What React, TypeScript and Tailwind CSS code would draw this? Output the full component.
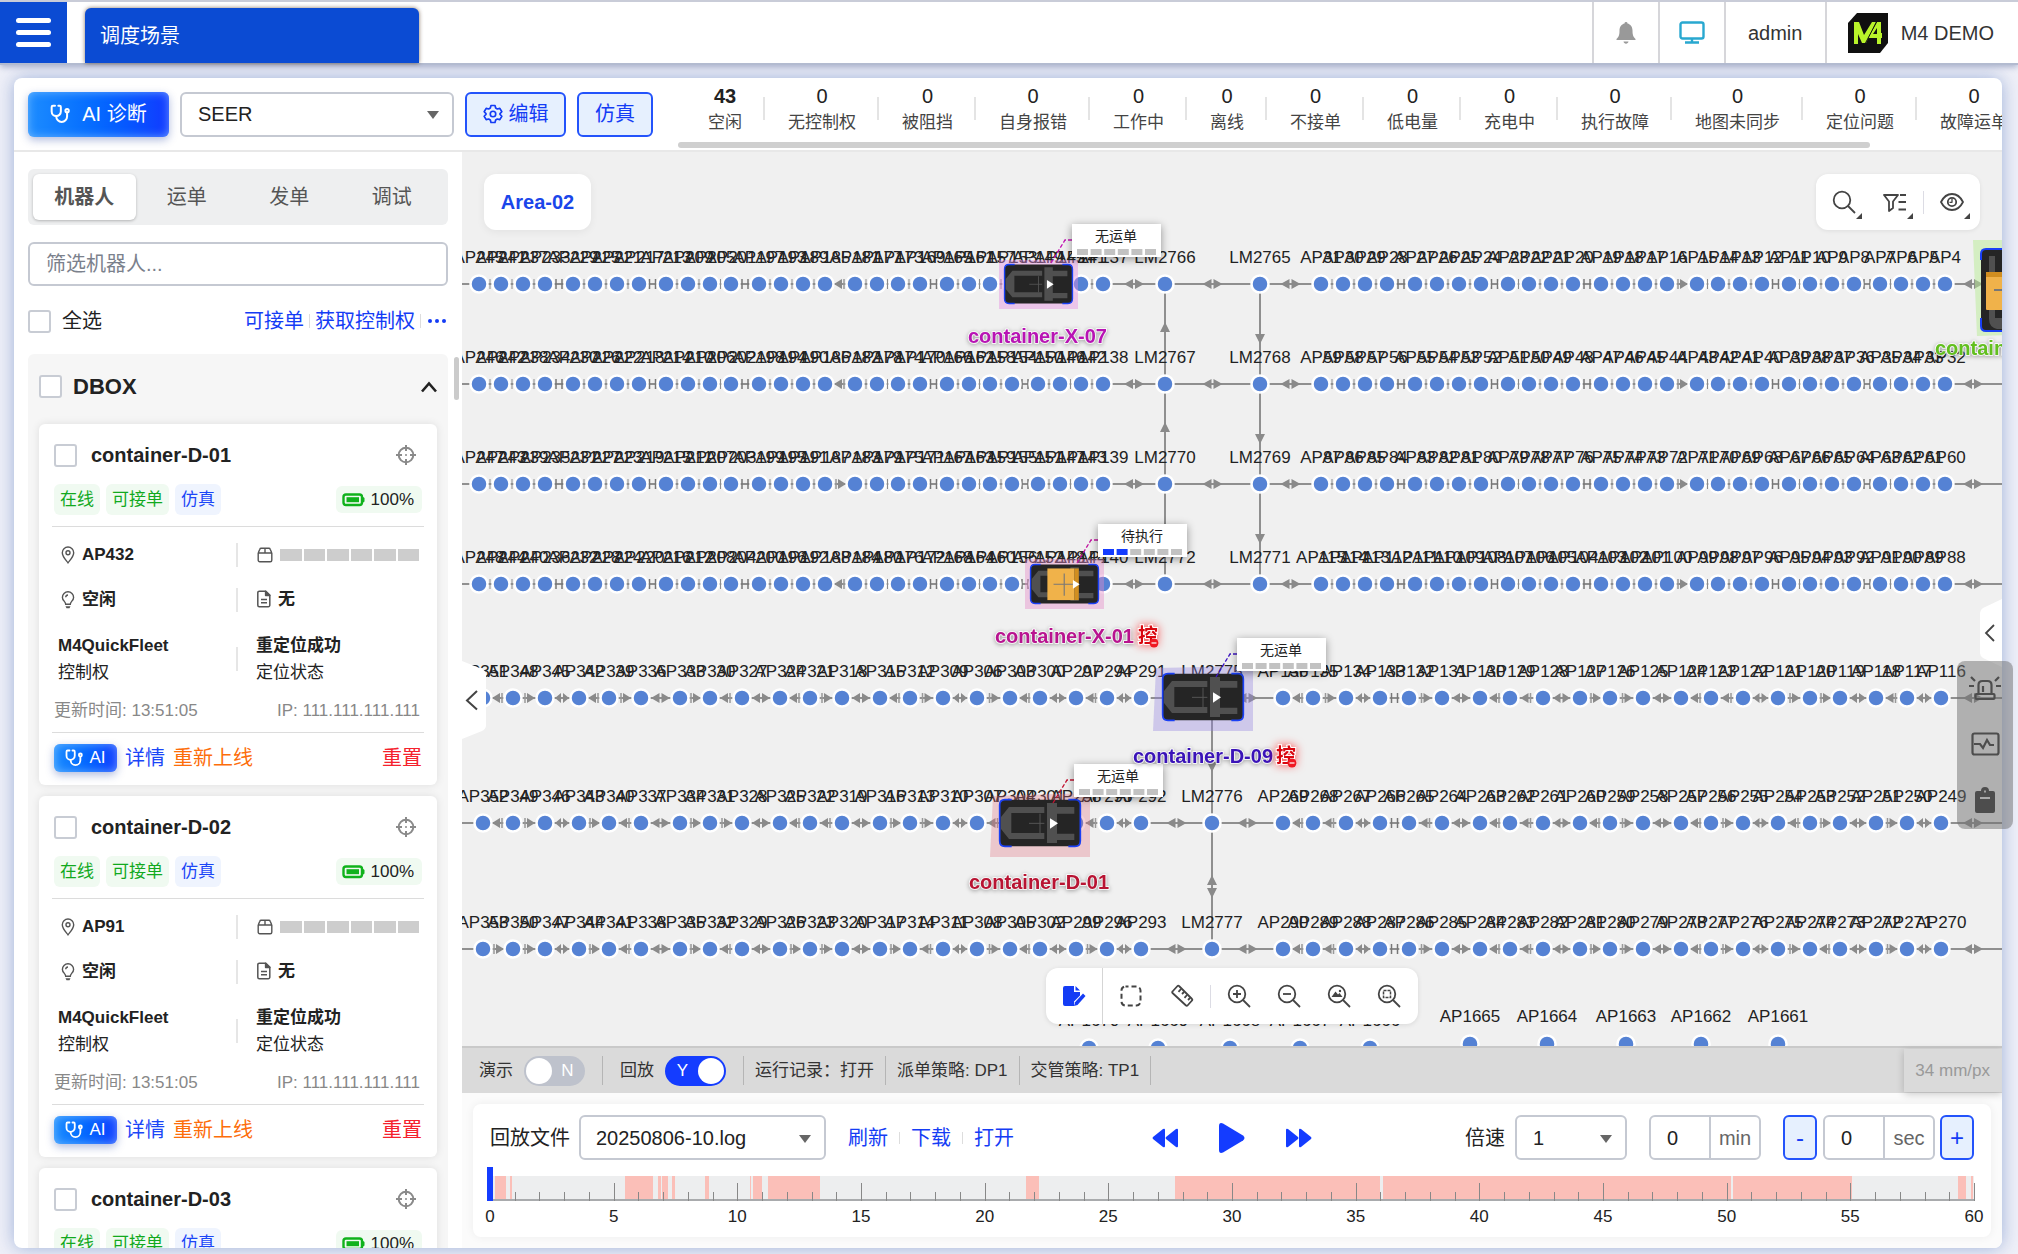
import React from "react";

const STATS: [string, string][] = [
  ["43", "空闲"],
  ["0", "无控制权"],
  ["0", "被阻挡"],
  ["0", "自身报错"],
  ["0", "工作中"],
  ["0", "离线"],
  ["0", "不接单"],
  ["0", "低电量"],
  ["0", "充电中"],
  ["0", "执行故障"],
  ["0", "地图未同步"],
  ["0", "定位问题"],
  ["0", "故障运单"],
];

const ROBOTS = [
  { name: "container-D-01", point: "AP432" },
  { name: "container-D-02", point: "AP91" },
  { name: "container-D-03", point: "AP92" },
];

/* ---------- icons ---------- */

function Stethoscope({ className }: { className: string }) {
  return (
    <svg viewBox="0 0 24 24" className={className} fill="none" stroke="currentColor" strokeWidth="2.4" strokeLinecap="round" strokeLinejoin="round" aria-hidden="true">
      <path d="M6 2H3.5A1.5 1.5 0 0 0 2 3.500V9a5.500 5.500 0 0 0 11 0V3.500A1.500 1.500 0 0 0 11.500 2H10" />
      <path d="M7.500 14.500V15a6.500 6.500 0 0 0 13 0v-4.500" />
      <circle cx="20.500" cy="8" r="2" />
    </svg>
  );
}

function Gear() {
  return (
    <svg viewBox="0 0 24 24" className="size-5" fill="none" stroke="currentColor" strokeWidth="2" strokeLinejoin="round" aria-hidden="true">
      <path d="M9.600 1.800h4.800l.8 3 2 1.200 3-.8 2.400 4.100-2.200 2.200v1l2.200 2.200-2.400 4.100-3-.8-2 1.200-.8 3H9.600l-.8-3-2-1.200-3 .8-2.400-4.100 2.200-2.200v-1L1.400 9.300l2.400-4.100 3 .8 2-1.200z" />
      <circle cx="12" cy="12" r="3.300" />
    </svg>
  );
}

function Crosshair() {
  return (
    <svg viewBox="0 0 20 20" className="size-5" fill="none" stroke="#8a8a8a" strokeWidth="2" aria-hidden="true">
      <circle cx="10" cy="10" r="7.300" />
      <path d="M10 0v6M10 14v6M0 10h6M14 10h6" />
      <circle cx="10" cy="10" r="1" fill="#8a8a8a" stroke="none" />
    </svg>
  );
}

function Pin() {
  return (
    <svg viewBox="0 0 14 18" className="h-[18px] w-3.5" fill="none" stroke="#555" strokeWidth="1.400" aria-hidden="true">
      <path d="M7 16.800C4.500 13.500 1.300 10.500 1.300 6.700a5.700 5.700 0 0 1 11.400 0c0 3.800-3.200 6.800-5.700 10.100z" />
      <circle cx="7" cy="6.700" r="2" />
    </svg>
  );
}

function Bulb() {
  return (
    <svg viewBox="0 0 14 18" className="h-[18px] w-3.5" fill="none" stroke="#555" strokeWidth="1.400" aria-hidden="true">
      <path d="M4.700 13.200C4.700 10.500 1.400 9.600 1.400 6.400a5.600 5.600 0 0 1 11.200 0c0 3.200-3.300 4.100-3.300 6.800z" />
      <path d="M4.700 6.200A2.400 2.400 0 0 1 7 4" />
      <path d="M4.500 15.200h5L8.500 17.200h-3z" fill="#555" stroke="none" />
    </svg>
  );
}

function BoxIcon() {
  return (
    <svg viewBox="0 0 16 16" className="size-4" fill="none" stroke="#555" strokeWidth="1.400" strokeLinejoin="round" aria-hidden="true">
      <path d="M1.200 6h13.600v7.300a1.500 1.500 0 0 1-1.500 1.500H2.700a1.500 1.500 0 0 1-1.500-1.500zM1.200 6l1.600-3.800a1.400 1.400 0 0 1 1.300-.9h7.800a1.400 1.400 0 0 1 1.300.9L14.800 6M8 1.300V6" />
    </svg>
  );
}

function Doc() {
  return (
    <svg viewBox="0 0 14 18" className="h-[18px] w-3.5" fill="none" stroke="#555" strokeWidth="1.500" strokeLinejoin="round" aria-hidden="true">
      <path d="M2.300 1.200h6.500l4 4v10a1.500 1.500 0 0 1-1.500 1.500h-9a1.500 1.500 0 0 1-1.500-1.500v-12.500a1.500 1.500 0 0 1 1.500-1.500z" />
      <path d="M8.600 1.200v4.200h4.200z" fill="#555" />
      <path d="M4 9.500h6M4 12.800h6" />
    </svg>
  );
}

function Battery() {
  return (
    <svg viewBox="0 0 24 14" className="h-3.5 w-6" aria-hidden="true">
      <rect x="1.500" y="1.500" width="18.500" height="10.500" rx="2.500" fill="none" stroke="#10b21c" strokeWidth="2.400" />
      <rect x="4.500" y="4.200" width="12.500" height="5" fill="#10b21c" />
      <path d="M20.500 3.500 22.500 5v3.500l-2 1.500z" fill="#10b21c" />
    </svg>
  );
}

function Logo() {
  return (
    <svg viewBox="0 0 40 40" className="size-10" role="img" aria-label="M4">
      <path d="M9 0H40V30L32 40H0V10z" fill="#101010" />
      <path d="M6 9h5l5 13 8-13h4L18 30h-4l-4-9v10H6z" fill="#b9f32a" />
      <path d="M29 9h4v11h1v5h-1v6h-4v-6h-9zM29 15l-4 6h4z" fill="#b9f32a" />
      <path d="M29 8 17 31" stroke="#101010" strokeWidth="1" />
    </svg>
  );
}

function Caret() {
  return (
    <span className="pointer-events-none absolute top-1/2 right-[15px] -mt-[3px] h-0 w-0 border-x-[6px] border-t-[8px] border-x-transparent border-t-[#666]" />
  );
}

function Lens({ children }: { children?: React.ReactNode }) {
  return (
    <svg viewBox="0 0 24 24" className="size-6" fill="none" stroke="#444" strokeWidth="1.800" aria-hidden="true">
      <circle cx="10" cy="10" r="8.300" />
      <path d="M16 16l7 7" />
      {children}
    </svg>
  );
}

/* ---------- header ---------- */

function Header() {
  return (
    <header className="relative z-10 flex h-[65px] shrink-0 border-y-2 border-t-[#c9ccd8] border-b-[#b3bbd0] bg-white shadow-[0_2px_6px_rgba(40,60,120,0.35)]">
      <button aria-label="菜单" className="flex w-[67px] flex-col items-center justify-center gap-[7px] bg-[#0b4bd3]">
        <span className="h-[5px] w-[35px] rounded-full bg-white" />
        <span className="h-[5px] w-[35px] rounded-full bg-white" />
        <span className="h-[5px] w-[35px] rounded-full bg-white" />
      </button>
      <a href="#scene" className="mt-1.5 ml-[18px] flex w-[334px] items-center rounded-t-md bg-[#0b4bd3] px-[15px] text-white shadow-[0_0_4px_rgba(60,30,0,0.6)]">
        调度场景
      </a>
      <div className="ml-auto flex text-[#333]">
        <button aria-label="通知" className="flex w-[66px] items-center justify-center border-l-2 border-[#d6d6da]">
          <svg viewBox="0 0 20 22" className="h-[22px] w-5" fill="#999" aria-hidden="true">
            <path d="M10 0a1.500 1.500 0 0 1 1.500 1.600C14.500 2.300 16.500 5 16.500 8.500c0 5 1 6.500 3 8.500v1h-19v-1c2-2 3-3.500 3-8.500 0-3.500 2-6.200 5-6.900A1.500 1.500 0 0 1 10 0zM7.500 19.500h5c-.3 1.400-1.200 2.200-2.500 2.200s-2.200-.8-2.500-2.200z" />
          </svg>
        </button>
        <button aria-label="屏幕" className="flex w-[66px] items-center justify-center border-l-2 border-[#d6d6da]">
          <svg viewBox="0 0 26 23" className="h-[23px] w-[26px]" fill="none" stroke="#29a8d0" strokeWidth="2.400" aria-hidden="true">
            <rect x="1.500" y="1.500" width="23" height="16" rx="2" />
            <path d="M13 17.500v3M6 21.500h14" />
          </svg>
        </button>
        <button className="w-[101px] border-l-2 border-[#d6d6da]">admin</button>
        <div className="flex items-center gap-[13px] border-l-2 border-[#d6d6da] pr-6 pl-[21px]">
          <Logo />
          <span>M4 DEMO</span>
        </div>
      </div>
    </header>
  );
}

/* ---------- toolbar ---------- */

const aiStyle =
  "bg-linear-to-r from-[#1d8cff] to-[#1338ff] text-white shadow-[0_3px_8px_rgba(30,60,160,0.35),inset_0_0_10px_rgba(140,200,255,0.7)]";

function Toolbar() {
  return (
    <div className="flex h-[74px] shrink-0 border-b-2 border-[#e8e8e8]">
      <div className="flex shrink-0 items-center gap-[11px] pl-3.5">
        <button className={"flex h-[45px] w-[141px] items-center justify-center gap-3 rounded-md " + aiStyle}>
          <Stethoscope className="size-5" />
          AI 诊断
        </button>
        <div className="relative">
          <select aria-label="场景" className="h-[45px] w-[274px] appearance-none rounded-md border-2 border-[#c5c9d2] bg-white pl-4">
            <option>SEER</option>
          </select>
          <Caret />
        </div>
        <button className="flex h-[45px] w-[101px] items-center justify-center gap-1.5 rounded-md border-2 border-[#2353fb] bg-[#e6f0fe] text-[#143cf5]">
          <Gear />
          编辑
        </button>
        <button className="h-[45px] w-[76px] rounded-md border-2 border-[#2353fb] bg-[#e6f0fe] text-[#143cf5]">仿真</button>
      </div>
      <div className="ml-[25px] flex min-w-0 flex-1 flex-col">
        <div className="flex flex-1 overflow-hidden pl-[7px]">
          {STATS.map(([n, label], i) => (
            <div key={label} className="relative shrink-0 px-[23px] pt-1.5 text-center">
              <div className={"h-6 leading-6 " + (i === 0 ? "font-bold" : "")}>{n}</div>
              <div className="h-7 text-[17px] leading-[29px] whitespace-nowrap text-[#444]">{label}</div>
              <span className="absolute top-[19px] right-0 h-[23px] w-0.5 bg-[#e4e4e4]" />
            </div>
          ))}
        </div>
        <div className="mb-0.5 h-1.5 w-[90%] rounded-full bg-[#cfcfcf]" />
      </div>
    </div>
  );
}

/* ---------- sidebar ---------- */

const box = "size-[23px] shrink-0 appearance-none rounded-[3px] border-2 border-[#c8ccd4] bg-white";

function RobotCard({ name, point }: { name: string; point: string }) {
  return (
    <article className="shrink-0 rounded-md bg-white px-[15px] pt-4 pb-[13px] text-[17px] shadow-[0_0_8px_rgba(0,0,0,0.1)]">
      <div className="flex h-[30px] items-center">
        <label className="flex items-center gap-3.5 text-xl font-bold">
          <input type="checkbox" className={box} />
          {name}
        </label>
        <button aria-label="定位" className="mr-1.5 ml-auto">
          <Crosshair />
        </button>
      </div>
      <div className="mt-3.5 flex h-[31px] items-center gap-1.5 leading-[31px]">
        <span className="rounded-md bg-[#f0faf1] px-1.5 text-[#12a91e]">在线</span>
        <span className="rounded-md bg-[#f0faf1] px-1.5 text-[#12a91e]">可接单</span>
        <span className="rounded-md bg-[#eff4fe] px-1.5 text-[#1b46f7]">仿真</span>
        <span className="ml-auto flex h-[27px] items-center gap-[5px] rounded-md bg-[#f0faf1] pr-2 pl-1.5">
          <Battery />
          100%
        </span>
      </div>
      <div className="-mx-0.5 mt-[11px] h-px bg-[#dcdcdc]" />
      <div className="mt-[5px] flex h-[45px] items-center">
        <div className="flex w-1/2 items-center gap-[7px] border-r-2 border-[#e6e6e6] pl-[7px] leading-6 font-bold">
          <Pin />
          {point}
        </div>
        <div className="flex w-1/2 items-center gap-[7px] pr-[3px] pl-[19px]">
          <BoxIcon />
          <div className="flex flex-1 gap-0.5">
            {[0, 1, 2, 3, 4, 5].map((k) => (
              <span key={k} className="h-3 flex-1 bg-[#cdcdcd]" />
            ))}
          </div>
        </div>
      </div>
      <div className="flex h-[45px] items-center">
        <div className="flex w-1/2 items-center gap-[7px] border-r-2 border-[#e6e6e6] pl-[7px] leading-6 font-bold">
          <Bulb />
          空闲
        </div>
        <div className="flex w-1/2 items-center gap-[7px] pl-[19px] font-bold">
          <Doc />无
        </div>
      </div>
      <div className="mt-2.5 flex items-center leading-[27px]">
        <div className="w-1/2 pl-1">
          <div className="font-bold">M4QuickFleet</div>
          <div>控制权</div>
        </div>
        <span className="-ml-0.5 h-6 w-0.5 bg-[#e6e6e6]" />
        <div className="pl-[18px]">
          <div className="font-bold">重定位成功</div>
          <div>定位状态</div>
        </div>
      </div>
      <div className="mt-[11px] flex justify-between pr-0.5 leading-7 text-[#888]">
        <span>更新时间: 13:51:05</span>
        <span>IP: 111.111.111.111</span>
      </div>
      <div className="-mx-0.5 mt-[7px] h-px bg-[#dcdcdc]" />
      <div className="mt-[11px] flex h-7 items-center gap-2 text-xl">
        <button className={"flex h-7 w-[63px] items-center justify-center gap-1.5 rounded-md text-[17px] " + aiStyle}>
          <Stethoscope className="size-[18px]" />
          AI
        </button>
        <button className="text-[#1b46f7]">详情</button>
        <button className="text-[#fd6d0a]">重新上线</button>
        <button className="ml-auto text-[#f5222d]">重置</button>
      </div>
    </article>
  );
}

function Sidebar() {
  const tabs = ["机器人", "运单", "发单", "调试"];
  return (
    <aside className="relative flex w-[448px] shrink-0 flex-col px-3.5 pt-[17px]">
      <div className="flex h-14 shrink-0 rounded-md bg-[#eeeff0] p-[5px]">
        {tabs.map((t, i) => (
          <button
            key={t}
            className={
              i === 0
                ? "flex-1 rounded-md bg-white font-bold text-[#555] shadow-[0_1px_3px_rgba(0,0,0,0.25)]"
                : "flex-1 text-[#555]"
            }
          >
            {t}
          </button>
        ))}
      </div>
      <input
        aria-label="筛选机器人"
        placeholder="筛选机器人..."
        className="mt-[17px] h-11 shrink-0 rounded-md border-2 border-[#c5c9d2] px-4 placeholder:text-[#7b818c]"
      />
      <div className="mt-5 flex h-[30px] shrink-0 items-center">
        <label className="flex items-center gap-[11px]">
          <input type="checkbox" className={box} />
          全选
        </label>
        <div className="ml-auto flex items-center gap-[5px] text-[#143cf5]">
          <button>可接单</button>
          <span className="h-3.5 w-px bg-[#ddd]" />
          <button>获取控制权</button>
          <span className="h-3.5 w-px bg-[#ddd]" />
          <button aria-label="更多" className="flex gap-[3px] px-0.5">
            <span className="size-1 rounded-full bg-[#143cf5]" />
            <span className="size-1 rounded-full bg-[#143cf5]" />
            <span className="size-1 rounded-full bg-[#143cf5]" />
          </button>
        </div>
      </div>
      <section className="mt-[18px] flex min-h-0 flex-1 flex-col overflow-hidden rounded-t-md bg-[#f6f6f6] px-[11px]">
        <div className="mb-1 flex h-[66px] shrink-0 items-center">
          <label className="flex items-center gap-[11px] text-[22px] font-bold">
            <input type="checkbox" className={box} />
            DBOX
          </label>
          <button aria-label="收起" className="ml-auto">
            <svg viewBox="0 0 16 12" className="h-3 w-4" fill="none" stroke="#222" strokeWidth="2.600" aria-hidden="true">
              <path d="M1 10.500 8 2.500l7 8" />
            </svg>
          </button>
        </div>
        <div className="flex flex-col gap-[11px]">
          {ROBOTS.map((r) => (
            <RobotCard key={r.name} {...r} />
          ))}
        </div>
      </section>
      <span className="absolute top-[205px] right-[3px] h-[43px] w-[5px] rounded-full bg-[#cbcbcb]" />
    </aside>
  );
}

/* ---------- map ---------- */

const LEFT_A = [
  479, 501, 523, 545, 573, 595, 617, 639, 666, 688, 710, 731, 759, 781, 803, 825, 855, 877, 898, 920, 947, 969, 990,
  1012, 1038, 1060, 1081, 1103,
];
const RIGHT_A = [
  1321, 1343, 1365, 1387, 1415, 1437, 1459, 1481, 1508, 1529, 1551, 1573, 1601, 1623, 1645, 1667, 1697, 1718, 1740,
  1762, 1789, 1810, 1832, 1854, 1880, 1901, 1923, 1945,
];
const LEFT_B = [
  483, 513, 545, 579, 609, 641, 680, 710, 742, 780, 810, 842, 880, 910, 943, 977, 1010, 1040, 1076, 1107, 1141,
];
const RIGHT_B = [
  1283, 1313, 1346, 1380, 1409, 1442, 1480, 1510, 1543, 1580, 1610, 1643, 1681, 1711, 1743, 1778, 1810, 1840, 1876,
  1907, 1941,
];

type Row = { y: number; dots: { x: number; label: string }[]; dirs: string };

function buildRow(y: number, first: number, step: number, lms: [number, number][], right: number, wide: boolean, dirs: string): Row {
  const l = wide ? LEFT_B : LEFT_A;
  const r = wide ? RIGHT_B : RIGHT_A;
  return {
    y,
    dirs,
    dots: [
      ...l.map((x, i) => ({ x, label: "AP" + (first - i * step) })),
      ...lms.map(([x, n]) => ({ x, label: "LM" + n })),
      ...r.map((x, i) => ({ x, label: "AP" + (right - i) })),
    ],
  };
}

const ROWS: Row[] = [
  buildRow(284, 245, 4, [[1165, 2766], [1260, 2765]], 31, false, "LR"),
  buildRow(384, 246, 4, [[1165, 2767], [1260, 2768]], 59, false, "LR"),
  buildRow(484, 247, 4, [[1165, 2770], [1260, 2769]], 87, false, "RR"),
  buildRow(584, 248, 4, [[1165, 2772], [1260, 2771]], 115, false, "LR"),
  buildRow(698, 351, 3, [[1212, 2775]], 136, true, "LRBLRBRLBLRBLRBRLBLBBBLRBLRBLLBRRBLLBRRBLB"),
  buildRow(823, 352, 3, [[1212, 2776]], 269, true, "LRBRLBRRBLLBRRBLLBLBBBLLBRLBLLBLRBLRBLRBRB"),
  buildRow(949, 353, 3, [[1212, 2777]], 290, true, "RRBRLBRLBRRBRLBRLBRBBBLLBRRBLLBRRBLRBRLBRB"),
];

function Link({ a, b, y, dir }: { a: number; b: number; y: number; dir: string }) {
  const free = b - a - 20;
  const m = (a + b) / 2;
  if (free <= 4) return <path d={`M${m} ${y - 5}v10`} stroke="#8c8c8c" strokeWidth="1" />;
  if (free <= 9) return <path d={`M${m - 3} ${y - 5}v10M${m + 3} ${y - 5}v10`} stroke="#777" strokeWidth="1.500" />;
  if (dir !== "B" && free <= 14) {
    const s = dir === "R" ? 1 : -1;
    return (
      <g>
        <path d={`M${m - 4 * s} ${y - 5}v10`} stroke="#999" strokeWidth="1.500" />
        <path d={`M${m + 6 * s} ${y}l${-8 * s} -5v10z`} fill="#8a8a8a" />
      </g>
    );
  }
  const len = Math.min(9, free / 2 - 1);
  return <path d={`M${m - 1 - len} ${y}l${len} -5v10zM${m + 1 + len} ${y}l${-len} -5v10z`} fill="#8a8a8a" />;
}

function Dot({ x, y }: { x: number; y: number }) {
  return <circle cx={x} cy={y} r="8.500" fill="#5582d4" stroke="#fff" strokeWidth="2.500" />;
}

function Vehicle({ x, y, w, h, cargo }: { x: number; y: number; w: number; h: number; cargo?: boolean }) {
  return (
    <svg x={x} y={y} width={w} height={h} viewBox="0 0 246 144" preserveAspectRatio="none" overflow="visible">
      <rect x="2" y="2" width="242" height="140" rx="16" fill="#252525" />
      <path d="M2 125V18Q2 2 18 2h20M208 2h20q16 0 16 16v107q0 17-16 17h-20M38 142H18Q2 142 2 125" fill="none" stroke="#1a40f5" strokeWidth="5" />
      <path d="M136 24H30L6 54v36l24 30h106v-18H37V42h99z" fill="#505050" />
      <path d="M144 12h30v12h52v20h-52v60h52v19h-52v9h-30z" fill="#505050" />
      <path d="M90 73h46M123 44v58" stroke="#555" strokeWidth="3" />
      {cargo && (
        <g>
          <rect x="62" y="16" width="96" height="114" fill="#f0b24a" />
          <rect x="158" y="16" width="16" height="114" fill="#d18e20" />
          <path d="M84 73h72M122 34v80" stroke="#777" strokeWidth="4" />
        </g>
      )}
      <path d="M153 58l24 15-24 16z" fill="#fff" />
    </svg>
  );
}

function Popup({ x, y, text, done, color }: { x: number; y: number; text: string; done: number; color: string }) {
  return (
    <g>
      <path d={`M${x} ${y + 16}h-7l-14 23`} fill="none" stroke={color} strokeWidth="1.300" strokeDasharray="4 2" />
      <g className="drop-shadow-[0_2px_4px_rgba(0,0,0,0.4)]">
        <rect x={x} y={y} width="89" height="33" fill="#fff" />
      </g>
      <text x={x + 44} y={y + 17} fontSize="14" textAnchor="middle" fill="#222">
        {text}
      </text>
      {[0, 1, 2, 3, 4, 5].map((k) => (
        <rect key={k} x={x + 5 + k * 13.600} y={y + 25} width="11" height="6" fill={k < done ? "#143cff" : "#c2c2c2"} />
      ))}
    </g>
  );
}

function Name({ x, y, text, color, control }: { x: number; y: number; text: string; color: string; control?: boolean }) {
  return (
    <g>
      <text x={x} y={y} fontSize="20" fontWeight="bold" fill={color} stroke="#fff" strokeOpacity=".8" strokeWidth="2" paintOrder="stroke" strokeLinejoin="round" className="drop-shadow-[0_1px_2px_rgba(0,0,0,0.35)]">
        {text}
      </text>
      {control && (
        <g>
          <text x={x + 143} y={y} fontSize="20" fontWeight="bold" fill="#d9070f" stroke="#fff" strokeWidth="2" paintOrder="stroke" className="drop-shadow-[0_0_5px_rgba(255,0,0,0.7)]">
            控
          </text>
          <circle cx={x + 159} cy={y} r="4.500" fill="#f01822" />
          <path d={`M${x + 156.500} ${y}h5`} stroke="#fff" strokeWidth="1.200" />
        </g>
      )}
    </g>
  );
}

function MapCanvas() {
  return (
    <svg
      viewBox="462 152 1540 894"
      preserveAspectRatio="xMinYMin slice"
      className="absolute inset-0 h-full w-full"
      role="img"
      aria-label="地图"
    >
      <g stroke="#6f6f6f" strokeWidth="1.500">
        {ROWS.map((r) => (
          <path key={r.y} d={`M462 ${r.y}H2002`} />
        ))}
        <path d="M1165 284V584M1260 284V584M1212 698V949" />
      </g>
      <g fill="#8a8a8a">
        <path d="M1165 322l-5 10h10zM1165 422l-5 10h10zM1165 522l-5 10h10z" />
        <path d="M1260 344l-5 -10h10zM1260 444l-5 -10h10zM1260 544l-5 -10h10z" />
        <path d="M1212 772l-5 -10h10zM1212 875l-5 10h10zM1212 898l-5 -10h10z" />
      </g>
      {ROWS.map((r) => (
        <g key={r.y}>
          {r.dots.slice(1).map((d, i) => (
            <Link key={d.x} a={r.dots[i].x} b={d.x} y={r.y} dir={r.dirs.length > 2 ? r.dirs[i] : i < 28 ? r.dirs[0] : r.dirs[1]} />
          ))}
          <path d={`M1963 ${r.y}l9 -5v10zM1983 ${r.y}l-9 -5v10z`} fill="#8a8a8a" />
        </g>
      ))}
      {ROWS.map((r) => (
        <g key={r.y}>
          {r.dots.map((d) => (
            <Dot key={d.x} x={d.x} y={r.y} />
          ))}
        </g>
      ))}
      {[1470, 1547, 1626, 1701, 1778].map((x, i) => (
        <g key={x}>
          <Dot x={x} y={1044} />
          <text x={x} y="1022" fontSize="17" textAnchor="middle" fill="#222">{"AP" + (1665 - i)}</text>
        </g>
      ))}
      {[1089, 1158, 1230, 1300, 1370].map((x, i) => (
        <g key={x}>
          <Dot x={x} y={1048} />
          <text x={x} y="1026" fontSize="17" textAnchor="middle" fill="#222">{"AP" + (1670 - i)}</text>
        </g>
      ))}
      <g fontSize="17" textAnchor="middle" fill="#222">
        {ROWS.map((r) =>
          r.dots.map((d) => (
            <text key={r.y + d.label} x={d.x} y={r.y - 21}>
              {d.label}
            </text>
          )),
        )}
      </g>

      <path d="M999 260h79v49h-79z" fill="#e58be0" fillOpacity=".42" />
      <Vehicle x={1004} y={264} w={69} h={40} />
      <path d="M1025 559h79v50h-79z" fill="#e58bc8" fillOpacity=".42" />
      <Vehicle x={1030} y={564} w={69} h={40} cargo />
      <path d="M1156 668L1253 666V731H1153z" fill="#8f7de0" fillOpacity=".35" />
      <Vehicle x={1162} y={673} w={82} h={48} />
      <path d="M993 796L1090 793V857H990z" fill="#e0707e" fillOpacity=".32" />
      <Vehicle x={999} y={799} w={82} h={48} />
      <path d="M1973 240H2040V334L1977 336z" fill="#b8ec94" fillOpacity=".5" />
      <g>
        <rect x="1981" y="249" width="60" height="82" rx="5" fill="#252525" />
        <path d="M1981 260v-6q0-5 5-5h16M1981 318v8q0 5 5 5h16" fill="none" stroke="#1a40f5" strokeWidth="2" />
        <path d="M1989 256h6v16h-6zM1989 310h6v8h8v11h-6q-8-2-8-10z" fill="#505050" />
        <rect x="1986" y="272" width="20" height="38" rx="1" fill="#f0b24a" />
        <rect x="1986" y="272" width="20" height="5" fill="#d18e20" />
        <path d="M1994 290h10" stroke="#777" strokeWidth="2" />
      </g>

      <Popup x={1072} y={224} text="无运单" done={0} color="#c214b4" />
      <Popup x={1098} y={524} text="待执行" done={2} color="#c214a0" />
      <Popup x={1237} y={638} text="无运单" done={0} color="#3d14c2" />
      <Popup x={1074} y={764} text="无运单" done={0} color="#c21432" />
      <Name x={968} y={343} text="container-X-07" color="#b813b4" />
      <Name x={995} y={643} text="container-X-01" color="#b8138f" control />
      <Name x={1133} y={763} text="container-D-09" color="#3a13b8" control />
      <Name x={969} y={889} text="container-D-01" color="#b81332" />
      <Name x={1935} y={355} text="container-D-10" color="#62bf1e" />
    </svg>
  );
}

const tick = "absolute right-[-6px] bottom-[-5px] h-0 w-0 border-b-[6px] border-l-[6px] border-b-[#444] border-l-transparent";

function MapArea() {
  return (
    <div className="relative min-h-0 flex-1 overflow-hidden bg-[#f0f0f0]">
      <MapCanvas />
      <button className="absolute top-[22px] left-[22px] h-14 w-[107px] rounded-xl bg-white font-bold text-[#1a46ea] shadow-[0_2px_8px_rgba(0,0,0,0.06)]">
        Area-02
      </button>
      <div className="absolute top-[22px] right-[22px] flex h-14 items-center rounded-xl bg-white px-4 shadow-[0_1px_4px_rgba(0,0,0,0.08)]">
        <button aria-label="搜索" className="relative">
          <Lens />
          <i className={tick} />
        </button>
        <button aria-label="筛选" className="relative ml-[27px]">
          <svg viewBox="0 0 24 24" className="size-6" fill="none" stroke="#444" strokeWidth="1.800" strokeLinejoin="round" aria-hidden="true">
            <path d="M1 5h14l-5 6.500V18l-4 3v-9.500zM17 5h6M15.500 12H23M15.500 19.500H23" />
          </svg>
          <i className={tick} />
        </button>
        <span className="mx-4 h-[23px] w-px bg-[#dcdce4]" />
        <button aria-label="显示" className="relative">
          <svg viewBox="0 0 24 24" className="size-6" fill="none" stroke="#444" strokeWidth="1.800" strokeLinejoin="round" aria-hidden="true">
            <path d="M1 12c2.500-5 6.500-8 11-8s8.500 3 11 8c-2.500 5-6.500 8-11 8s-8.500-3-11-8z" />
            <circle cx="12" cy="12" r="4.200" />
            <path d="M12 8.500v3.800H9.500" strokeWidth="1.300" />
          </svg>
          <i className={tick} />
        </button>
      </div>

      <button aria-label="收起侧栏" className="absolute top-[509px] left-0 h-[78px] w-6">
        <svg viewBox="0 0 24 78" className="h-full w-full" aria-hidden="true">
          <path d="M0 0l20 8q4 2 4 6v50q0 4-4 6L0 78z" fill="#fff" />
          <path d="M15 30L5 39.500l10 9" fill="none" stroke="#444" strokeWidth="2" />
        </svg>
      </button>
      <button aria-label="展开" className="absolute top-[447px] right-0 h-[68px] w-[22px]">
        <svg viewBox="0 0 22 68" className="h-full w-full" aria-hidden="true">
          <path d="M22 0L3 9q-3 2-3 5v40q0 3 3 5l19 9z" fill="#fff" />
          <path d="M14 26l-8 8 8 8" fill="none" stroke="#444" strokeWidth="1.800" />
        </svg>
      </button>

      <div className="absolute bottom-[22px] left-1/2 flex h-14 w-[372px] -translate-x-1/2 items-center rounded-xl bg-white shadow-[0_1px_5px_rgba(0,0,0,0.1)]">
        <button aria-label="编辑" className="flex h-full w-[57px] items-center justify-center border-r border-[#d5d5d5]">
          <svg viewBox="0 0 24 22" className="h-[22px] w-6" fill="#143cf5" aria-hidden="true">
            <path d="M3 1h9v6h6v3.500l-6 6V21H3a2 2 0 0 1-2-2V3a2 2 0 0 1 2-2zM13.500 1l4.500 4.500h-4.500z" />
            <path d="M21 8.500l2.500 2.500-8 9-3.500 1 1-3.800z" />
          </svg>
        </button>
        <button aria-label="框选" className="ml-[17px]">
          <svg viewBox="0 0 22 22" className="size-[22px]" fill="none" stroke="#444" strokeWidth="2" aria-hidden="true">
            <rect x="1.500" y="1.500" width="19" height="19" rx="4" strokeDasharray="5 3" strokeDashoffset="2" />
          </svg>
        </button>
        <button aria-label="测量" className="ml-7">
          <svg viewBox="0 0 24 24" className="size-6" fill="none" stroke="#444" strokeWidth="1.800" strokeLinejoin="round" aria-hidden="true">
            <path d="M2.500 7.500l5-5.500a1 1 0 0 1 1.500 0L22 15a1 1 0 0 1 0 1.500L17.500 21.500a1 1 0 0 1-1.500 0L2.500 9a1 1 0 0 1 0-1.500z" />
            <path d="M11 5l-2.500 2.800M14 8l-2 2M17 11l-2.500 2.800M20 14l-2 2" />
          </svg>
        </button>
        <span className="mx-4 h-[23px] w-px bg-[#dcdce4]" />
        <div className="flex gap-[26px]">
          <button aria-label="放大">
            <Lens>
              <path d="M6 10h8M10 6v8" />
            </Lens>
          </button>
          <button aria-label="缩小">
            <Lens>
              <path d="M6 10h8" />
            </Lens>
          </button>
          <button aria-label="适应图片">
            <Lens>
              <path d="M4.500 13l4-5.500 2.500 3 1.500-1.500 3 4z" fill="#444" stroke="none" />
              <circle cx="13" cy="7" r="1.200" fill="#444" stroke="none" />
            </Lens>
          </button>
          <button aria-label="适应选区">
            <Lens>
              <rect x="6.500" y="6.500" width="7" height="7" strokeWidth="1.500" strokeDasharray="3 1" />
            </Lens>
          </button>
        </div>
      </div>
    </div>
  );
}

/* ---------- status bar and playback ---------- */

function StatusBar() {
  const bar = <span className="h-[29px] w-px bg-[#b5b5b5]" />;
  return (
    <div className="relative flex h-[47px] shrink-0 items-center border-t-2 border-[#c9c9c9] bg-[#dadada] pl-[17px] text-[17px] whitespace-nowrap text-[#333]">
      <span>演示</span>
      <button role="switch" aria-checked="false" aria-label="演示" className="mr-[17px] ml-[11px] flex h-[30px] w-[61px] items-center rounded-full bg-[#bec2cc] p-0.5 text-white">
        <span className="size-[26px] rounded-full bg-white" />
        <span className="flex-1 text-center">N</span>
      </button>
      {bar}
      <span className="ml-[17px]">回放</span>
      <button role="switch" aria-checked="true" aria-label="回放" className="mr-[17px] ml-[11px] flex h-[30px] w-[61px] items-center rounded-full bg-[#143cff] p-0.5 text-white">
        <span className="flex-1 text-center">Y</span>
        <span className="size-[26px] rounded-full bg-white" />
      </button>
      {bar}
      <span className="mx-[11px]">运行记录：打开</span>
      {bar}
      <span className="mx-[11px]">派单策略: DP1</span>
      {bar}
      <span className="mx-[11px]">交管策略: TP1</span>
      {bar}
      <span className="ml-auto flex h-[43px] items-center bg-[#dadada] pr-3 pl-[11px] text-[#999] shadow-[0_2px_8px_rgba(0,0,0,0.2)]">34 mm/px</span>
    </div>
  );
}

const SEGMENTS: [number, number][] = [
  [0.2, 0.65], [0.8, 0.87], [5.46, 6.6], [6.8, 6.9], [6.95, 7.2], [7.36, 7.46], [8.7, 8.85], [10.5, 10.56],
  [10.65, 11], [11.22, 13.36], [21.67, 22.2], [27.7, 36], [36.12, 50.17], [50.25, 55.08], [59.35, 59.68], [59.86, 59.97],
];

function Timeline() {
  const ticks = Array.from({ length: 61 }, (_, i) => i);
  return (
    <div className="relative mt-[7px] h-[60px] text-[17px]">
      <div className="absolute inset-x-0 top-[9px] h-[25px] border-b-2 border-[#a9abad] bg-[#edeeef]">
        {SEGMENTS.map(([a, b]) => (
          <span key={a} className="absolute inset-y-0 bg-[#fbbfb8]" style={{ left: `${(a / 60) * 100}%`, width: `${((b - a) / 60) * 100}%` }} />
        ))}
      </div>
      {ticks.map((t) => (
        <span
          key={t}
          className={t % 5 === 0 ? "absolute top-4 h-[18px] w-px bg-[#888]" : "absolute top-[25px] h-[9px] w-px bg-[#888]"}
          style={{ left: `${(t / 60) * 100}%` }}
        />
      ))}
      {ticks
        .filter((t) => t % 5 === 0)
        .map((t) => (
          <span key={t} className="absolute top-[38px] w-10 -translate-x-1/2 text-center leading-6" style={{ left: `${(t / 60) * 100}%` }}>
            {t}
          </span>
        ))}
      <span className="absolute top-0 -left-[3px] h-[34px] w-1.5 bg-[#143cff]" />
    </div>
  );
}

function Unit({ label, unit }: { label: string; unit: string }) {
  return (
    <div className="flex h-[45px] w-28 overflow-hidden rounded-md border-2 border-[#c5c9d2] bg-white">
      <input aria-label={label} defaultValue="0" className="w-[60px] border-r-2 border-[#c5c9d2] pl-4" />
      <span className="flex flex-1 items-center justify-center text-[#666]">{unit}</span>
    </div>
  );
}

function Playback() {
  const step = "h-[45px] w-[34px] rounded-md border-2 border-[#2353fb] bg-[#e6f0fe] text-2xl leading-none text-[#143cf5]";
  return (
    <div className="shrink-0 bg-[#fbfbfb] p-[11px]">
      <div className="rounded-lg bg-white pt-[11px] pr-[17px] pb-2.5 pl-[17px] shadow-[0_0_10px_rgba(0,0,0,0.06)]">
        <div className="grid grid-cols-[1fr_auto_1fr] items-center">
          <div className="flex items-center whitespace-nowrap">
            <label htmlFor="log">回放文件</label>
            <div className="relative mr-[22px] ml-[9px]">
              <select id="log" className="h-[45px] w-[247px] appearance-none rounded-md border-2 border-[#c5c9d2] bg-white pl-[15px]">
                <option>20250806-10.log</option>
              </select>
              <Caret />
            </div>
            <div className="flex items-center gap-[11px] text-[#143cf5]">
              <button>刷新</button>
              <span className="h-3 w-px bg-[#ddd]" />
              <button>下载</button>
              <span className="h-3 w-px bg-[#ddd]" />
              <button>打开</button>
            </div>
          </div>
          <div className="flex items-center gap-10 text-[#143cff]">
            <button aria-label="后退">
              <svg viewBox="0 0 27 20" className="h-5 w-[27px]" fill="currentColor" aria-hidden="true">
                <path d="M13 2v16q0 2-2 1L1 11q-1-1 0-2L11 1q2-1 2 1zM26 2v16q0 2-2 1l-10-8q-1-1 0-2l10-8q2-1 2 1z" />
              </svg>
            </button>
            <button aria-label="播放">
              <svg viewBox="0 0 26 30" className="h-[30px] w-[26px]" fill="currentColor" aria-hidden="true">
                <path d="M0 3q0-4 4-2.500l20 12q3 2.500 0 5l-20 12Q0 31 0 27z" />
              </svg>
            </button>
            <button aria-label="前进">
              <svg viewBox="0 0 27 20" className="h-5 w-[27px]" fill="currentColor" aria-hidden="true">
                <path d="M14 2v16q0 2 2 1l10-8q1-1 0-2L16 1q-2-1-2 1zM1 2v16q0 2 2 1l10-8q1-1 0-2L3 1Q1 0 1 2z" />
              </svg>
            </button>
          </div>
          <div className="flex items-center justify-end whitespace-nowrap">
            <label htmlFor="speed">倍速</label>
            <div className="relative mr-[22px] ml-2.5">
              <select id="speed" className="h-[45px] w-28 appearance-none rounded-md border-2 border-[#c5c9d2] bg-white pl-4">
                <option>1</option>
              </select>
              <Caret />
            </div>
            <Unit label="分钟" unit="min" />
            <button className={step + " mr-1.5 ml-[22px]"}>-</button>
            <Unit label="秒" unit="sec" />
            <button className={step + " ml-[5px]"}>+</button>
          </div>
        </div>
        <Timeline />
      </div>
    </div>
  );
}

function Dock() {
  return (
    <nav className="absolute top-[661px] right-[5px] z-20 flex h-[168px] w-14 flex-col items-center justify-between rounded-lg bg-[#707070]/50 pt-3.5 pb-4">
      <button aria-label="告警">
        <svg viewBox="0 0 32 26" className="h-[26px] w-8" fill="none" stroke="#4d4d4d" strokeWidth="2.200" aria-hidden="true">
          <path d="M9.500 19V10q0-4 4-4h5q4 0 4 4v9M14 11v6" />
          <rect x="6.500" y="19" width="19" height="5" rx="1" />
          <path d="M0 11h5M27 11h5M2 2l4 4M30 2l-4 4" />
        </svg>
      </button>
      <button aria-label="监控">
        <svg viewBox="0 0 29 24" className="h-6 w-[29px]" fill="none" stroke="#4d4d4d" strokeWidth="2.200" aria-hidden="true">
          <rect x="1.500" y="1.500" width="26" height="21" rx="2" />
          <path d="M3 12h6l3 4 4-8 3 5h4" />
        </svg>
      </button>
      <button aria-label="任务">
        <svg viewBox="0 0 20 26" className="h-[26px] w-5" fill="#4d4d4d" aria-hidden="true">
          <path d="M2 4h4a4 4 0 0 1 8 0h4a2 2 0 0 1 2 2v18a2 2 0 0 1-2 2H2a2 2 0 0 1-2-2V6a2 2 0 0 1 2-2z" />
          <path d="M5 11h10M10 3.500v2" stroke="#aaa" strokeWidth="1.800" />
        </svg>
      </button>
    </nav>
  );
}

export default function App() {
  return (
    <div className="relative flex h-screen flex-col overflow-hidden bg-[#eff0f8] font-['Liberation_Sans','Noto_Sans_CJK_SC',sans-serif] text-xl text-[#222]">
      <Header />
      <main className="mt-[13px] mr-4 mb-1.5 ml-3.5 flex min-h-0 flex-1 flex-col overflow-hidden rounded-lg bg-white shadow-[0_0_18px_rgba(60,100,180,0.45)]">
        <Toolbar />
        <div className="flex min-h-0 flex-1">
          <Sidebar />
          <section className="flex min-w-0 flex-1 flex-col">
            <MapArea />
            <StatusBar />
            <Playback />
          </section>
        </div>
      </main>
      <Dock />
    </div>
  );
}
